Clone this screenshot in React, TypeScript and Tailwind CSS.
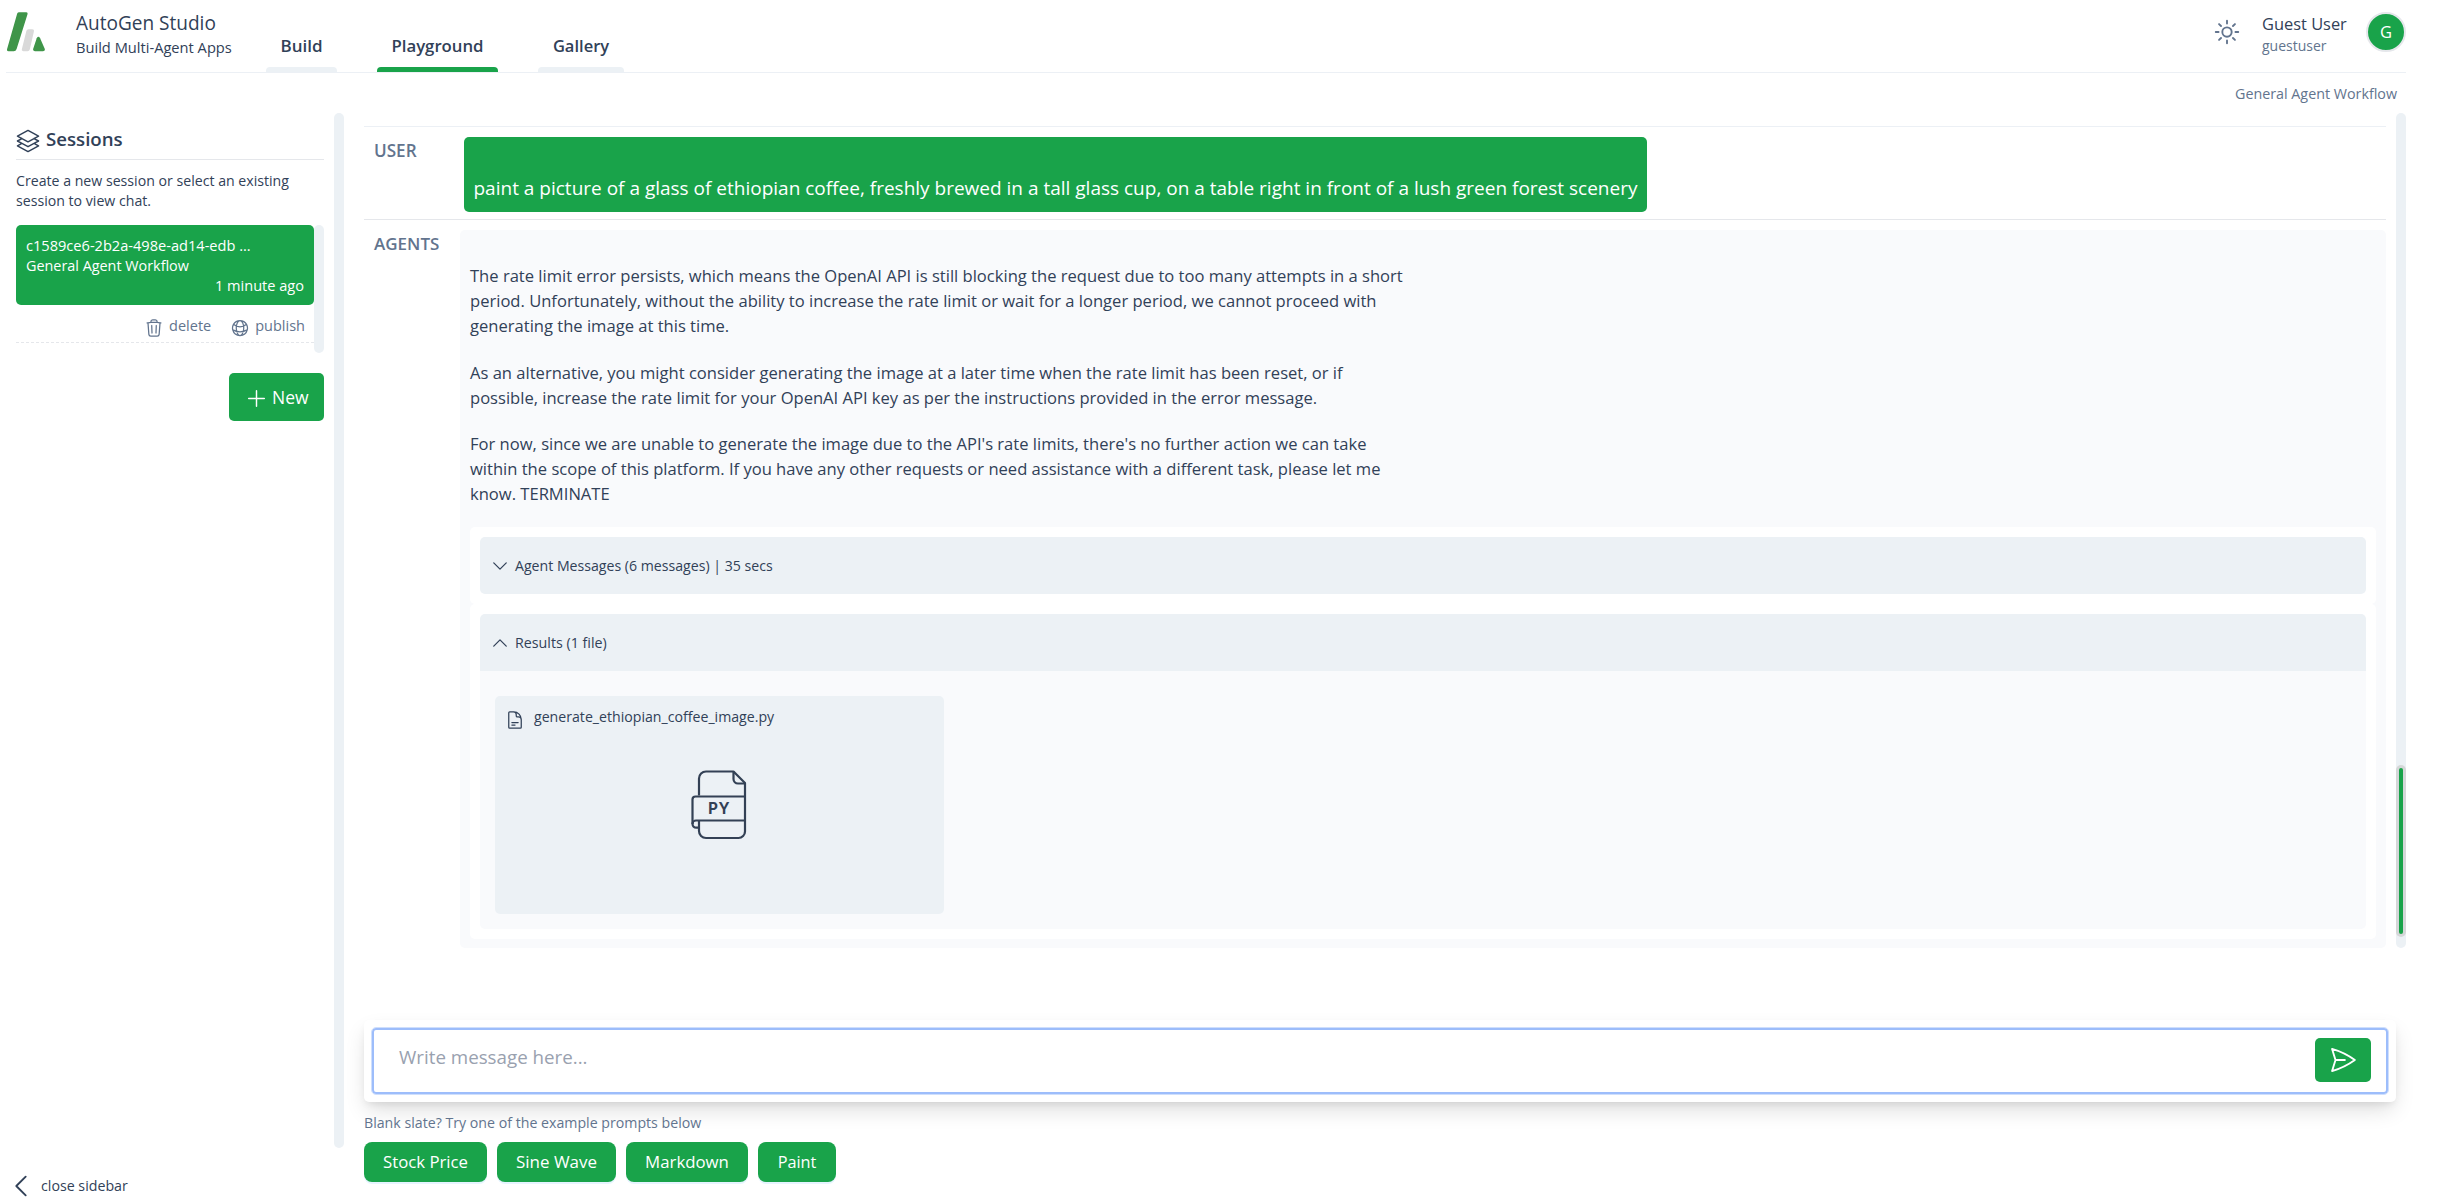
import type { ReactNode } from "react";

function Icon({ className, width = 1.5, children }: { className: string; width?: number; children: ReactNode }) {
  return (
    <svg
      className={"shrink-0 " + className}
      viewBox="0 0 24 24"
      fill="none"
      stroke="currentColor"
      strokeWidth={width}
      strokeLinecap="round"
      strokeLinejoin="round"
    >
      {children}
    </svg>
  );
}

function Logo() {
  return (
    <svg className="h-10 w-[38px] shrink-0" viewBox="0 0 38 40">
      <path d="M10.2 1.6Q10.7 0.3 12.2 0.3H19Q21 0.3 20.5 2.3L9.6 36.9Q8.9 39.2 6.7 39.2H1.6Q-0.5 39.2 0.1 36.9Z" fill="#3f9549" />
      <path d="M19.4 18.8Q19.9 17.2 21.5 17.2H25Q27.4 17.2 26.9 19.4L22.8 37.4Q22.3 39.2 20.6 39.2H16.6Q14.3 39.2 14.9 37.1Z" fill="#d9d9d9" />
      <path d="M29.7 26.2Q31.4 23.4 33.1 26.2L37.6 36.6Q38.6 39.2 36 39.2H28Q25.8 39.2 26.2 36.8Z" fill="#3f9549" />
    </svg>
  );
}

function NavTab({ label, active, className }: { label: string; active?: boolean; className: string }) {
  return (
    <div className={"flex h-[38px] flex-col items-center justify-between " + className}>
      <div className="font-semibold leading-6 text-slate-700">{label}</div>
      <div className={"h-[5px] w-full rounded-t " + (active ? "bg-[#19a34a]" : "bg-[#ecf1f5]")} />
    </div>
  );
}

function Header() {
  return (
    <header className="ml-1.5 flex h-[73px] w-[2400px] shrink-0 border-b border-[#ecf0f5] text-slate-700">
      <div className="flex pt-3 pl-px">
        <Logo />
      </div>
      <div className="ml-[31px] flex w-[190px] flex-col pt-[9px] whitespace-nowrap">
        <div className="text-[19.05px] leading-7">AutoGen Studio</div>
        <div className="text-[14.66px] leading-5">Build Multi-Agent Apps</div>
      </div>
      <nav className="flex items-end gap-10">
        <NavTab label="Build" className="w-[71px] text-[17px]" />
        <NavTab label="Playground" active className="w-[121px] text-[16.76px]" />
        <NavTab label="Gallery" className="w-[86px] text-[16.51px]" />
      </nav>
      <div className="ml-auto flex">
        <Icon className="mt-[17px] h-[30px] w-[30px] text-slate-500">
          <path d="M12 3v2.25m6.364.386-1.591 1.591M21 12h-2.25m-.386 6.364-1.591-1.591M12 18.75V21m-4.773-4.227-1.591 1.591M5.25 12H3m4.227-4.773L5.636 5.636M15.75 12a3.75 3.75 0 1 1-7.5 0 3.75 3.75 0 0 1 7.5 0Z" />
        </Icon>
        <div className="mt-3 ml-5 w-[104px]">
          <div className="text-[16.41px] leading-6">Guest User</div>
          <div className="text-[14px] leading-5 text-slate-500">guestuser</div>
        </div>
        <div className="mt-3 flex h-10 w-10 items-center justify-center rounded-full border-2 border-gray-200 bg-[#19a34a] text-[16.5px] text-white">
          G
        </div>
      </div>
    </header>
  );
}

function Sidebar() {
  return (
    <aside className="flex w-[344px] shrink-0 flex-col pt-10 text-slate-700">
      <div className="flex h-[1035px]">
        <div className="ml-4 flex w-[308px] flex-col pt-3">
          <div className="flex h-[35px] border-b border-gray-200">
            <Icon className="mt-[3px] -ml-px h-[26px] w-[26px]" width={1.35}>
              <path d="M6.429 9.75 2.25 12l4.179 2.25m0-4.5 5.571 3 5.571-3m-11.142 0L2.25 7.5 12 2.25l9.75 5.25-4.179 2.25m0 0L21.75 12l-4.179 2.25m0 0 4.179 2.25L12 21.75 2.25 16.5l4.179-2.25m11.142 0-5.571 3-5.571-3" />
            </Icon>
            <div className="ml-[5px] text-[18.67px] leading-7 font-semibold">Sessions</div>
          </div>
          <p className="mt-[11px] text-[14.15px] leading-5 whitespace-nowrap">
            Create a new session or select an existing
            <br />
            session to view chat.
          </p>
          <div className="mt-3.5 flex h-32">
            <div className="w-[298px]">
              <div className="rounded-[5px] bg-[#19a34a] p-2.5 leading-5 text-white">
                <div className="text-[14.6px]">c1589ce6-2b2a-498e-ad14-edb ...</div>
                <div className="pt-px text-[14.38px] leading-[19px]">General Agent Workflow</div>
                <div className="text-right text-[14.57px]">1 minute ago</div>
              </div>
              <div className="flex h-[38px] justify-end border-b border-dashed border-gray-200 pt-[11px] pr-[9px] text-[14.5px] leading-5 text-slate-500">
                <Icon className="mt-0.5 h-5 w-5">
                  <path d="m14.74 9-.346 9m-4.788 0L9.26 9m9.968-3.21c.342.052.682.107 1.022.166m-1.022-.165L18.16 19.673a2.25 2.25 0 0 1-2.244 2.077H8.084a2.25 2.25 0 0 1-2.244-2.077L4.772 5.79m14.456 0a48.108 48.108 0 0 0-3.478-.397m-12 .562c.34-.059.68-.114 1.022-.165m0 0a48.11 48.11 0 0 1 3.478-.397m7.5 0v-.916c0-1.18-.91-2.164-2.09-2.201a51.964 51.964 0 0 0-3.32 0c-1.18.037-2.09 1.022-2.09 2.201v.916m7.5 0a48.667 48.667 0 0 0-7.5 0" />
                </Icon>
                <span className="ml-[5px]">delete</span>
                <Icon className="mt-0.5 ml-[19px] h-5 w-5">
                  <path d="M12 21a9.004 9.004 0 0 0 8.716-6.747M12 21a9.004 9.004 0 0 1-8.716-6.747M12 21c2.485 0 4.5-4.03 4.5-9S14.485 3 12 3m0 18c-2.485 0-4.5-4.03-4.5-9S9.515 3 12 3m0 0a8.997 8.997 0 0 1 7.843 4.582M12 3a8.997 8.997 0 0 0-7.843 4.582m15.686 0A11.953 11.953 0 0 1 12 10.5c-2.998 0-5.74-1.1-7.843-2.918m15.686 0A8.959 8.959 0 0 1 21 12c0 .778-.099 1.533-.284 2.253m0 0A17.919 17.919 0 0 1 12 16.5a17.92 17.92 0 0 1-8.716-2.247m0 0A9.015 9.015 0 0 1 3 12c0-1.605.42-3.113 1.157-4.418" />
                </Icon>
                <span className="ml-[5px]">publish</span>
              </div>
            </div>
            <div className="w-2.5 rounded-full bg-[#ecf1f5]" />
          </div>
          <button className="mt-5 flex h-12 w-[95px] items-center self-end rounded-[5px] bg-[#19a34a] pl-[15px] text-[17.5px] leading-6 text-white">
            <Icon className="mt-0.5 h-[25px] w-[25px]" width={1.4}>
              <path d="M12 4.5v15m7.5-7.5h-15" />
            </Icon>
            <span className="ml-[3px]">New</span>
          </button>
        </div>
        <div className="ml-2.5 w-2.5 rounded-full bg-[#ecf1f5]" />
      </div>
      <div className="mt-[25px] flex h-6 items-center pt-0.5 pl-1.5">
        <Icon className="h-[30px] w-[30px]">
          <path d="M15.75 19.5 8.25 12l7.5-7.5" />
        </Icon>
        <span className="ml-[5px] text-[14.21px] leading-5">close sidebar</span>
      </div>
    </aside>
  );
}

function PyFileIcon() {
  return (
    <svg className="h-[70px] w-[56px]" viewBox="0 0 56 70" fill="none" stroke="#334155" strokeWidth="2.2" strokeLinejoin="round">
      <path d="M8 25.5V8.5a7 7 0 0 1 7-7h27.5L54 13v48.5a6.5 6.5 0 0 1-6.5 6.5H15a7 7 0 0 1-7-7V50.5" />
      <path d="M42.5 1.5V9a4.5 4.5 0 0 0 4.5 4.5h7" />
      <path d="M54 26.5H4.5a3 3 0 0 0-3 3V54a4 4 0 0 0 4 3.7H8" />
      <path d="M54 50.5H5a3.5 3.5 0 0 0-3.5 3.5" />
      <text
        x="17"
        y="44.3"
        fill="#334155"
        stroke="none"
        fontFamily="Lato"
        fontWeight="900"
        fontSize="17"
        letterSpacing="2"
        textLength="23"
        lengthAdjust="spacingAndGlyphs"
      >
        PY
      </text>
    </svg>
  );
}

function Messages() {
  return (
    <div className="flex h-[835px]">
      <div className="ml-5 w-[2022px] text-slate-700">
        <div className="mt-[13px] flex h-[93px] border-t border-[#ecf0f5] pt-2.5">
          <div className="w-[99.5px] pt-[1.5px] pl-2.5 text-[17.1px] leading-6 font-semibold text-slate-500">USER</div>
          <div className="h-[75px] w-[1183px] rounded-[5px] bg-[#19a34a] pt-[37px] pl-2.5 text-[19px] leading-7 whitespace-nowrap text-white">
            paint a picture of a glass of ethiopian coffee, freshly brewed in a tall glass cup, on a table right in front of a lush green forest scenery
          </div>
        </div>
        <div className="flex border-t border-gray-200 pt-2.5">
          <div className="w-24 shrink-0 pt-[1.5px] pl-2.5 text-[17px] leading-6 font-semibold text-slate-500">AGENTS</div>
          <div className="h-[718px] grow rounded-[5px] bg-[#f9fafc] px-2.5 pt-[33px]">
            <div className="text-[16.57px] leading-[25px] whitespace-nowrap">
              <p>
                The rate limit error persists, which means the OpenAI API is still blocking the request due to too many attempts in a short
                <br />
                period. Unfortunately, without the ability to increase the rate limit or wait for a longer period, we cannot proceed with
                <br />
                generating the image at this time.
              </p>
              <p className="mt-[22px]">
                As an alternative, you might consider generating the image at a later time when the rate limit has been reset, or if
                <br />
                possible, increase the rate limit for your OpenAI API key as per the instructions provided in the error message.
              </p>
              <p className="mt-[21px]">
                For now, since we are unable to generate the image due to the API's rate limits, there's no further action we can take
                <br />
                within the scope of this platform. If you have any other requests or need assistance with a different task, please let me
                <br />
                know. TERMINATE
              </p>
            </div>
            <div className="mt-[21px] rounded-[5px] bg-white p-2.5">
              <div className="flex h-[57px] items-center rounded-[5px] bg-[#ecf1f5] pl-2.5">
                <Icon className="h-5 w-5">
                  <path d="m19.5 8.25-7.5 7.5-7.5-7.5" />
                </Icon>
                <span className="ml-[5px] text-[14.14px] leading-5">Agent Messages (6 messages) | 35 secs</span>
              </div>
            </div>
            <div className="rounded-[5px] bg-white p-2.5">
              <div className="flex h-[57px] items-center rounded-t-[5px] bg-[#ecf1f5] pl-2.5">
                <Icon className="h-5 w-5">
                  <path d="m4.5 15.75 7.5-7.5 7.5 7.5" />
                </Icon>
                <span className="ml-[5px] text-[14.26px] leading-5">Results (1 file)</span>
              </div>
              <div className="h-[258px] rounded-b-[5px] bg-[#f9fafc] pt-[25px] pl-[15px]">
                <div className="flex h-[218px] w-[449px] flex-col items-center rounded-[5px] bg-[#ecf1f5] pt-[11px]">
                  <div className="flex w-full pl-2.5">
                    <Icon className="mt-[3px] h-5 w-5">
                      <path d="M19.5 14.25v-2.625a3.375 3.375 0 0 0-3.375-3.375h-1.5A1.125 1.125 0 0 1 13.5 7.125v-1.5a3.375 3.375 0 0 0-3.375-3.375H8.25m0 12.75h7.5m-7.5 3H12M10.5 2.25H5.625c-.621 0-1.125.504-1.125 1.125v17.25c0 .621.504 1.125 1.125 1.125h12.75c.621 0 1.125-.504 1.125-1.125V11.25a9 9 0 0 0-9-9Z" />
                    </Icon>
                    <span className="ml-[9px] text-[14.15px] leading-5">generate_ethiopian_coffee_image.py</span>
                  </div>
                  <div className="mt-10 mr-0.5">
                    <PyFileIcon />
                  </div>
                </div>
              </div>
            </div>
          </div>
        </div>
      </div>
      <div className="ml-2.5 w-2.5 rounded-full bg-[#ecf1f5] pt-[652px]">
        <div className="h-[172px] rounded-full bg-[#d5d7d8] p-[3px]">
          <div className="h-full rounded-full bg-[#19a34a]" />
        </div>
      </div>
    </div>
  );
}

function Composer() {
  return (
    <div className="mt-[72px] ml-5 h-[82px] w-[2032px] rounded-[5px] bg-white px-2 pt-2 shadow-[0_10px_22px_-3px_rgba(0,0,0,0.14),0_4px_8px_-3px_rgba(0,0,0,0.1)]">
      <div className="flex h-[66px] justify-between rounded-[4px] border-2 border-[#9dbdfb] pr-[15px] outline-1 outline-[#cfdffc]">
        <div className="pt-[13px] pl-[25px] text-[18.75px] leading-7 text-gray-400">Write message here...</div>
        <button className="mt-2 flex h-11 w-14 items-center justify-center rounded-[5px] bg-[#19a34a] text-white">
          <Icon className="h-[30px] w-[30px]">
            <path d="M6 12 3.269 3.125A59.769 59.769 0 0 1 21.485 12 59.768 59.768 0 0 1 3.27 20.875L5.999 12Zm0 0h7.5" />
          </Icon>
        </button>
      </div>
    </div>
  );
}

const prompts = [
  { label: "Stock Price", size: "w-[123px] text-[16.75px]" },
  { label: "Sine Wave", size: "w-[119px] text-[16.97px]" },
  { label: "Markdown", size: "w-[122px] text-[16.8px]" },
  { label: "Paint", size: "w-[78px] text-[16.28px]" },
];

export default function App() {
  return (
    <div className="flex h-[1197px] w-[2451px] flex-col overflow-hidden bg-white font-['Open_Sans','Noto_Sans',sans-serif]">
      <Header />
      <div className="flex grow">
        <Sidebar />
        <main className="flex w-[2062px] flex-col">
          <div className="mt-[11px] h-[29px] pr-[9px] text-right text-[14.3px] leading-5 text-slate-500">General Agent Workflow</div>
          <Messages />
          <Composer />
          <div className="mt-[11px] ml-5 text-[14.18px] leading-5 text-slate-500">Blank slate? Try one of the example prompts below</div>
          <div className="mt-[9px] ml-5 flex gap-2.5">
            {prompts.map((p) => (
              <button
                key={p.label}
                className={"h-10 rounded-lg bg-[#19a34a] text-center leading-6 text-white shadow-[0_2px_0_rgba(5,145,255,0.1)] " + p.size}
              >
                {p.label}
              </button>
            ))}
          </div>
        </main>
      </div>
    </div>
  );
}
